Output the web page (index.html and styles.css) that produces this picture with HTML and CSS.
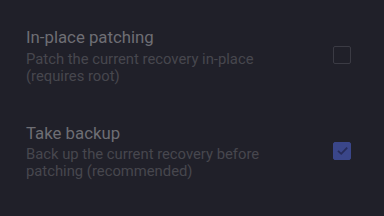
FILE: index.html
```html
<!DOCTYPE html>
<html lang="en">
<head>
    <meta charset="UTF-8">
    <meta name="viewport" content="width=device-width, initial-scale=1.0">
    <title>Patch options</title>
    <link rel="stylesheet" href="styles.css">
</head>
<body>
    <div class="pref-list">
        <div class="pref">
            <div class="pref-text">
                <div class="pref-title">In-place patching</div>
                <div class="pref-summary">Patch the current recovery in-place (requires root)</div>
            </div>
            <span class="checkbox"></span>
        </div>

        <div class="pref">
            <div class="pref-text">
                <div class="pref-title">Take backup</div>
                <div class="pref-summary">Back up the current recovery before patching (recommended)</div>
            </div>
            <span class="checkbox checked">
                <svg viewBox="0 0 19 19" width="19" height="19">
                    <path d="M5 9.8 L8.2 12.8 L14.2 6.6" fill="none" stroke="#262b58" stroke-width="1.8"/>
                </svg>
            </span>
        </div>
    </div>
</body>
</html>
```

FILE: styles.css
```css
body {
    margin: 0;
    background-color: #202029;
    font-family: 'Roboto', 'Noto Sans', sans-serif;
    width: 384px;
    height: 216px;
    overflow: hidden;
}

.pref-list {
    display: flex;
    flex-direction: column;
    gap: 37px;
    padding: 26px 33px 0 26px;
}

.pref {
    display: flex;
    align-items: center;
    gap: 35px;
}

.pref-text {
    flex: 1;
}

.pref-title {
    font-size: 16.8px;
    line-height: 22px;
    color: #6e6e74;
}

.pref-summary {
    margin-top: 2.5px;
    font-size: 14.8px;
    line-height: 17px;
    color: #47474e;
}

.checkbox {
    width: 16px;
    height: 16px;
    border: 1.5px solid #3b3b44;
    border-radius: 2px;
    flex-shrink: 0;
}

.checkbox.checked {
    background-color: #3a4689;
    border-color: #3a4689;
    position: relative;
}

.checkbox svg {
    position: absolute;
    left: -1.5px;
    top: -1.5px;
}
```
